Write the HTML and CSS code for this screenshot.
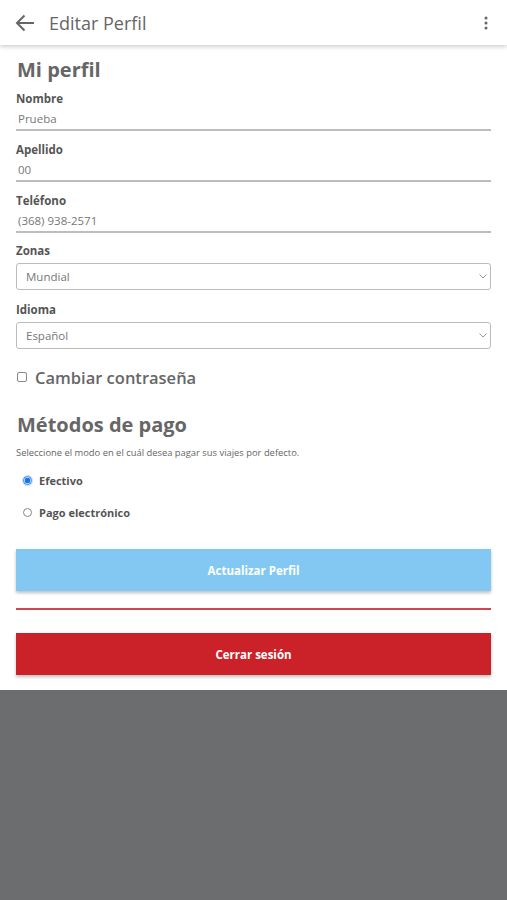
FILE: index.html
```html
<!DOCTYPE html>
<html lang="es">
<head>
<meta charset="utf-8">
<title>Editar Perfil</title>
<link rel="stylesheet" href="styles.css">
</head>
<body>
<div class="app">
  <header class="topbar">
    <svg class="back" width="20" height="18" viewBox="0 0 20 18"><path d="M19 9H2.5M9.5 1.5L2 9l7.5 7.5" fill="none" stroke="#666" stroke-width="2"/></svg>
    <span class="title">Editar Perfil</span>
    <svg class="kebab" width="4" height="14" viewBox="0 0 4 14"><circle cx="2" cy="2" r="1.5" fill="#666"/><circle cx="2" cy="7" r="1.5" fill="#666"/><circle cx="2" cy="12" r="1.5" fill="#666"/></svg>
  </header>
  <main class="content">
    <h1 class="h1">Mi perfil</h1>
    <div class="field">
      <div class="label">Nombre</div>
      <div class="input">Prueba</div>
    </div>
    <div class="field">
      <div class="label">Apellido</div>
      <div class="input">00</div>
    </div>
    <div class="field">
      <div class="label">Teléfono</div>
      <div class="input">(368) 938-2571</div>
    </div>
    <div class="field sel">
      <div class="label">Zonas</div>
      <div class="select"><span>Mundial</span><svg width="8" height="5" viewBox="0 0 8 5"><path d="M0.5 0.5L4 4l3.5-3.5" fill="none" stroke="#999" stroke-width="1"/></svg></div>
    </div>
    <div class="field sel">
      <div class="label">Idioma</div>
      <div class="select"><span>Español</span><svg width="8" height="5" viewBox="0 0 8 5"><path d="M0.5 0.5L4 4l3.5-3.5" fill="none" stroke="#999" stroke-width="1"/></svg></div>
    </div>
    <div class="check-row">
      <span class="checkbox"></span>
      <span class="check-label">Cambiar contraseña</span>
    </div>
    <h2 class="h2">Métodos de pago</h2>
    <p class="desc">Seleccione el modo en el cuál desea pagar sus viajes por defecto.</p>
    <div class="radio-row first">
      <span class="radio on"></span>
      <span class="radio-label">Efectivo</span>
    </div>
    <div class="radio-row">
      <span class="radio"></span>
      <span class="radio-label">Pago electrónico</span>
    </div>
    <button class="btn btn-blue">Actualizar Perfil</button>
    <div class="sep"></div>
    <button class="btn btn-red">Cerrar sesión</button>
  </main>
</div>
</body>
</html>
```

FILE: styles.css
```css
html, body {
  margin: 0;
  padding: 0;
}
body {
  background: #6c6d6f;
  font-family: "Open Sans", "Noto Sans", sans-serif;
  width: 507px;
  height: 900px;
  overflow: hidden;
}
.app {
  background: #fff;
}
.topbar {
  height: 45px;
  display: flex;
  align-items: center;
  background: #fff;
  box-shadow: 0 2px 4px rgba(0,0,0,0.18);
  position: relative;
  z-index: 1;
}
.back {
  margin-left: 15px;
}
.title {
  margin-left: 14px;
  font-size: 18px;
  color: #666;
  flex: 1;
}
.kebab {
  margin-right: 19px;
}
.content {
  padding: 12px 16px 15px;
}
.h1 {
  margin: 0;
  font-size: 20px;
  line-height: 26px;
  font-weight: 700;
  color: #666;
  padding-left: 1px;
}
.field {
  margin-top: 8px;
}
.field + .field {
  margin-top: 11px;
}
.field + .field.sel {
  margin-top: 10px;
}
.label {
  font-size: 11.5px;
  font-weight: 700;
  color: #555;
  line-height: 16px;
}
.input {
  margin-top: 2px;
  height: 20px;
  line-height: 20px;
  font-size: 11.5px;
  color: #777;
  padding-left: 2px;
  border-bottom: 2px solid #bdbdbd;
}
.field.sel + .field.sel {
  margin-top: 12px;
}
.select {
  margin-top: 4px;
  height: 25px;
  border: 1px solid #bbb;
  border-radius: 3px;
  display: flex;
  align-items: center;
  justify-content: space-between;
  padding: 0 3px 0 9px;
  font-size: 11.5px;
  color: #777;
}
.check-row {
  margin-top: 16px;
  height: 24px;
  display: flex;
  align-items: center;
}
.checkbox {
  width: 8px;
  height: 8px;
  border: 1px solid #888;
  border-radius: 2px;
  margin-left: 1px;
}
.check-label {
  margin-left: 8px;
  font-size: 16.5px;
  font-weight: 600;
  color: #666;
}
.h2 {
  margin: 23px 0 0;
  font-size: 20px;
  line-height: 26px;
  font-weight: 700;
  color: #666;
  padding-left: 1px;
}
.desc {
  margin: 8px 0 0;
  font-size: 9.4px;
  line-height: 14px;
  color: #666;
}
.radio-row {
  display: flex;
  align-items: center;
  height: 16px;
  margin-top: 16px;
}
.radio-row.first {
  margin-top: 12px;
}
.radio {
  width: 9px;
  height: 9px;
  border: 1px solid #888;
  border-radius: 50%;
  margin-left: 7px;
  box-sizing: border-box;
}
.radio.on {
  border: 1px solid #2a7ef5;
  background: radial-gradient(circle, #1a73e8 0 2.6px, #fff 3.2px);
  box-shadow: 0 0 0 1px rgba(42,126,245,0.25);
}
.radio-label {
  margin-left: 7px;
  font-size: 11px;
  font-weight: 700;
  color: #555;
}
.btn {
  display: block;
  width: 100%;
  height: 42px;
  border: 0;
  margin: 0;
  font-family: inherit;
  font-size: 11.5px;
  font-weight: 700;
  color: #fff;
  box-shadow: 0 2px 3px rgba(0,0,0,0.25);
}
.btn-blue {
  margin-top: 29px;
  background: #82c8f2;
}
.sep {
  margin-top: 17px;
  height: 2px;
  background: #d2444f;
}
.btn-red {
  margin-top: 23px;
  background: #cb2229;
}
```
